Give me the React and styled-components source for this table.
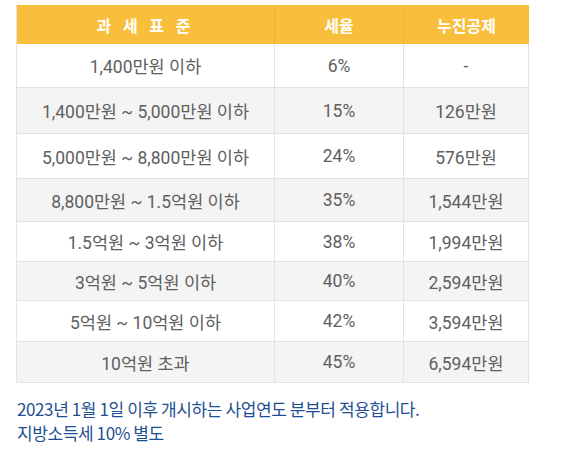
import React from 'react';
import styled, { createGlobalStyle } from 'styled-components';

const GlobalStyle = createGlobalStyle`
  body {
    margin: 0;
    background: #ffffff;
    font-family: Roboto, "Noto Sans CJK KR", sans-serif;
  }
`;

const Page = styled.div`
  width: 571px;
  height: 451px;
  padding: 5px 0 0 16px;
  box-sizing: border-box;
`;

const Table = styled.div`
  display: grid;
  grid-template-columns: 258px 129px 125px;
  width: 512px;
  border-left: 1px solid #e2e2e2;
  border-bottom: 1px solid #e2e2e2;
`;

const HeadCell = styled.div`
  height: 39px;
  display: flex;
  align-items: center;
  justify-content: center;
  background: #f9be3b;
  color: #fff;
  font-size: 16px;
  font-weight: 700;
  letter-spacing: ${p => (p.$spaced ? '4px' : '0')};
  font-family: "Noto Sans CJK KR", Roboto, sans-serif;
  border-right: ${p => (p.$last ? 'none' : '1px solid #f3b22a')};
`;

const Cell = styled.div`
  height: ${p => p.$h}px;
  box-sizing: border-box;
  display: flex;
  align-items: center;
  justify-content: center;
  background: ${p => (p.$alt ? '#f4f4f4' : '#ffffff')};
  color: #606060;
  font-size: 17.5px;
  border-right: 1px solid #e2e2e2;
  border-top: ${p => (p.$first ? 'none' : '1px solid #e2e2e2')};
`;

const Notes = styled.div`
  margin-top: 14px;
  padding-left: 1px;
  color: #1f4f93;
  font-size: 17px;
  line-height: 24px;
  letter-spacing: -0.4px;
  font-family: "Noto Sans CJK KR", sans-serif;
`;

const rows = [
  ['1,400만원 이하', '6%', '-', 43],
  ['1,400만원 ~ 5,000만원 이하', '15%', '126만원', 46],
  ['5,000만원 ~ 8,800만원 이하', '24%', '576만원', 45],
  ['8,800만원 ~ 1.5억원 이하', '35%', '1,544만원', 43],
  ['1.5억원 ~ 3억원 이하', '38%', '1,994만원', 40],
  ['3억원 ~ 5억원 이하', '40%', '2,594만원', 39],
  ['5억원 ~ 10억원 이하', '42%', '3,594만원', 41],
  ['10억원 초과', '45%', '6,594만원', 41],
];

export default function App() {
  return (
    <>
      <GlobalStyle />
      <Page>
        <Table>
          <HeadCell $spaced>과 세 표 준</HeadCell>
          <HeadCell>세율</HeadCell>
          <HeadCell $last>누진공제</HeadCell>
          {rows.map(([base, rate, ded, h], i) =>
            [base, rate, ded].map((v, j) => (
              <Cell key={`${i}-${j}`} $h={h} $alt={i % 2 === 1} $first={i === 0}>
                {v}
              </Cell>
            ))
          )}
        </Table>
        <Notes>
          2023년 1월 1일 이후 개시하는 사업연도 분부터 적용합니다.
          <br />
          지방소득세 10% 별도
        </Notes>
      </Page>
    </>
  );
}
